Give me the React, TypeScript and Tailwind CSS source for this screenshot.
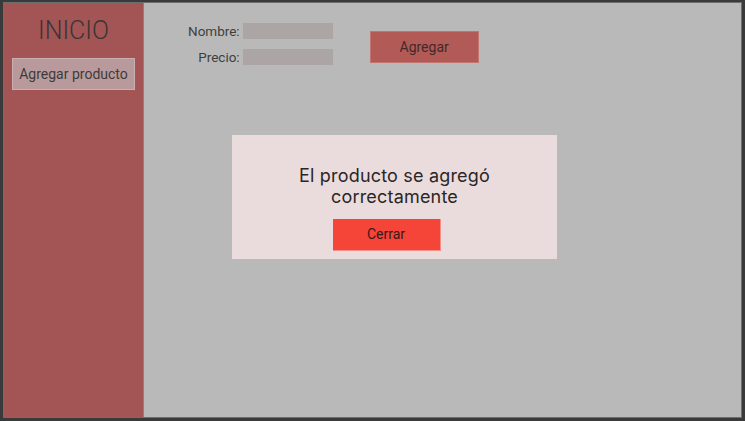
import React from "react";

export default function App() {
  return (
    <div className="w-[745px] h-[421px] bg-[#3a3a3a] pt-[2px] pl-[3px] pr-[3px] pb-[3px]">
      <div className="relative w-full h-full flex border border-[#6e6e6e] bg-[#b9b9b9] font-['Roboto',sans-serif]">
        <aside className="w-[140px] h-full bg-[#a35454] border-r border-[#b86e6e] flex flex-col items-center">
          <h1 className="mt-[13px] text-[25px] leading-[30px] text-[#3a3434] font-light">INICIO</h1>
          <button className="mt-[12px] w-[123px] h-[32px] bg-[#b89a9c] border border-[#c9afb0] text-[14px] text-[#3f3a3a]">
            Agregar producto
          </button>
        </aside>
        <main className="flex-1 flex items-start pt-[20px] pl-[44px]">
          <div className="flex flex-col gap-[10px]">
            <div className="flex items-center justify-end gap-[3px]">
              <span className="text-[13.5px] text-[#3f3f3f] leading-[16px]">Nombre:</span>
              <div className="w-[90px] h-[16px] bg-[#aca5a5]" />
            </div>
            <div className="flex items-center justify-end gap-[3px]">
              <span className="text-[13.5px] text-[#3f3f3f] leading-[16px]">Precio:</span>
              <div className="w-[90px] h-[16px] bg-[#aca5a5]" />
            </div>
          </div>
          <button className="ml-[37px] mt-[8px] w-[109px] h-[32px] bg-[#b25a55] border border-[#c27471] text-[14px] text-[#3f2a2a]">
            Agregar
          </button>
        </main>
        <div className="absolute left-[228px] top-[132px] w-[325px] h-[124px] bg-[#eadcdd] flex flex-col items-center pt-[30px] font-['Inter',sans-serif]">
          <p className="text-[18px] leading-[21px] text-[#2a2626] text-center tracking-[0.01em]">
            El producto se agregó
            <br />
            correctamente
          </p>
          <button className="mt-[12px] mr-[16px] w-[108px] h-[32px] bg-[#f54438] border-b border-r border-[#f08f88] text-[14px] text-[#3a1a18] font-['Roboto',sans-serif]">
            Cerrar
          </button>
        </div>
      </div>
    </div>
  );
}
